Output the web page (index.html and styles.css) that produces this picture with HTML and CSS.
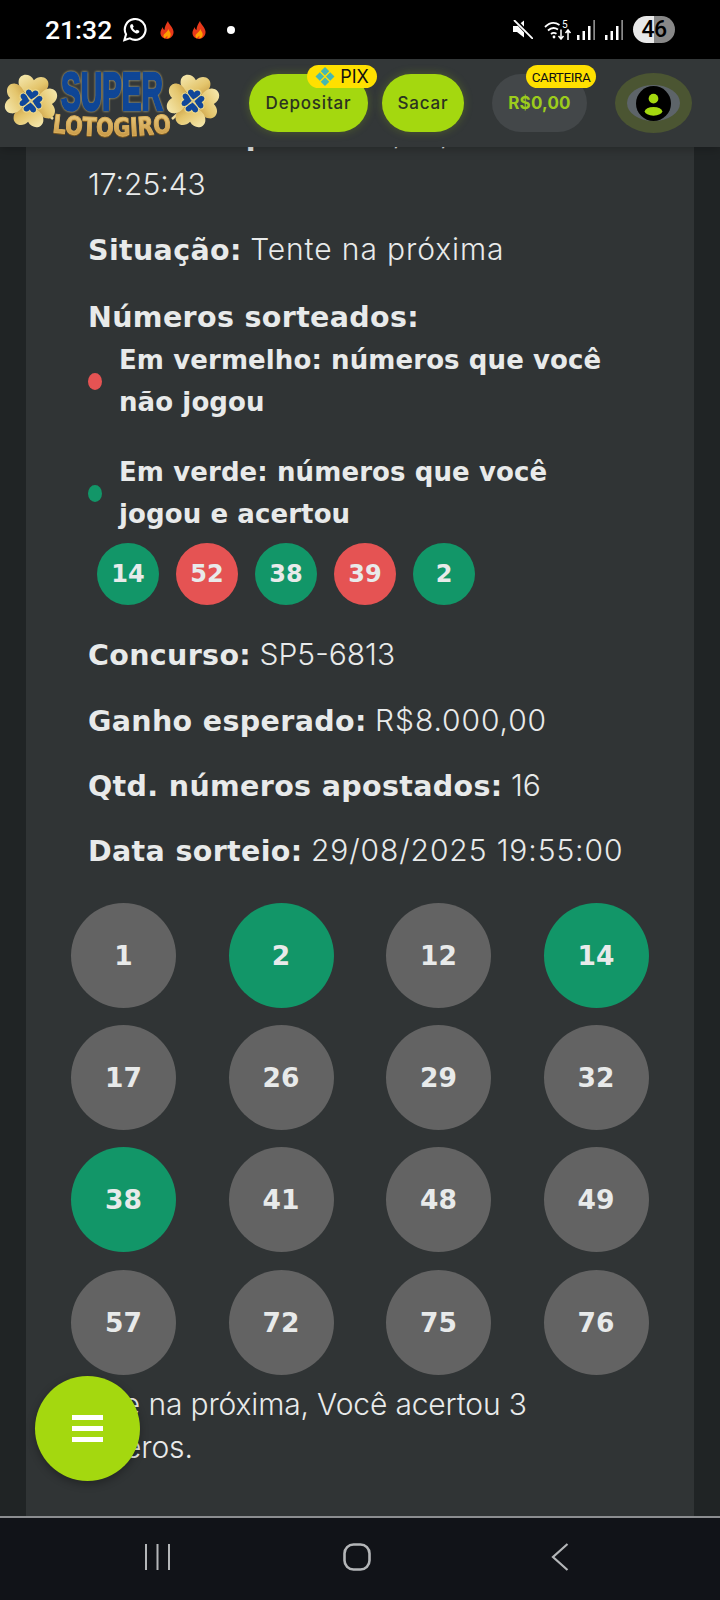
FILE: index.html
```html
<!DOCTYPE html>
<html>
<head>
    <meta name="viewport" content="width=device-width, initial-scale=1" />
    <title>Super Lotogiro</title>
    <link rel="stylesheet" href="styles.css">
</head>

<body>

<div class="statusbar">
    <div class="status-left">
        <span class="clock">21:32</span>
        <svg class="wa-icon" viewBox="0 0 26 26"><path d="M2.500 24l1.700-6A10.800 10.800 0 1 1 8.200 22.200z" fill="none" stroke="#fff" stroke-width="2.200"/><path d="M9.400 7.600c-1 .8-1.200 2.200-.7 3.600 1 2.600 3 4.600 5.600 5.600 1.500.5 2.900.2 3.700-.9l-.1-1.500-2.500-1.200-1.100 1.100c-1.400-.6-2.500-1.700-3.100-3.100l1-1.100-1.100-2.500z" fill="#fff"/></svg>
        <svg class="fire-icon" viewBox="0 0 14 18"><path d="M8 0c.5 3 5 6 5.500 10.500.4 4-2.500 7-6.500 7.500-4-.3-7-3-6.500-7C1 9 2 7.500 2.500 6 3 7.500 3.500 8.500 4.500 9 4.500 6 6 3 8 0z" fill="#e8391a"/><path d="M8.500 8c.3 2 2.500 3.500 2.200 6-.3 2-1.700 3.200-3.200 3.500-.5-1-.2-2 .3-3-1 .8-2.500 1.800-3 3-1-.8-1.500-2-1.300-3.200C4.200 12.500 7 11.500 8.500 8z" fill="#ffa000"/></svg>
        <svg class="fire-icon fire-second" viewBox="0 0 14 18"><path d="M8 0c.5 3 5 6 5.500 10.500.4 4-2.500 7-6.500 7.500-4-.3-7-3-6.500-7C1 9 2 7.500 2.500 6 3 7.500 3.500 8.500 4.500 9 4.500 6 6 3 8 0z" fill="#e8391a"/><path d="M8.500 8c.3 2 2.500 3.500 2.200 6-.3 2-1.700 3.200-3.200 3.500-.5-1-.2-2 .3-3-1 .8-2.500 1.800-3 3-1-.8-1.500-2-1.300-3.200C4.200 12.500 7 11.500 8.500 8z" fill="#ffa000"/></svg>
        <span class="dot"></span>
    </div>
    <div class="status-right">
        <svg class="mute-icon" viewBox="0 0 20 19"><path d="M0 6h4l7-5.500v17L4 12H0z" fill="#fff"/><path d="M2 0l17 18" stroke="#000" stroke-width="4"/><path d="M1 0l19 19" stroke="#fff" stroke-width="1.800"/></svg>
        <svg class="wifi-icon" viewBox="0 0 28 20"><path d="M1 7C5.500 2.500 11 2 15.500 5M4 10.500c3-2.800 7-3 10-1M7 14c1.800-1.500 3.500-1.500 5.500-.2" fill="none" stroke="#fff" stroke-width="1.800"/><circle cx="10" cy="17" r="1.400" fill="#fff"/><path d="M17 9.500v9.500M14.500 16l2.500 3 2.500-3M24 20V10M21.500 13l2.500-3 2.500 3" fill="none" stroke="#fff" stroke-width="1.500"/><text x="18" y="8" class="wifi-five">5</text></svg>
        <svg class="signal-icon" viewBox="0 0 18 20"><path d="M0 15h2.500v5H0zM5.500 11H8v9H5.500zM11 6h2.500v14H11z" fill="#fff"/><path d="M16.300 0H18v20h-1.700z" fill="#8a8a8a"/></svg>
        <svg class="signal-icon" viewBox="0 0 18 20"><path d="M0 15h2.500v5H0zM5.500 11H8v9H5.500zM11 6h2.500v14H11z" fill="#fff"/><path d="M16.300 0H18v20h-1.700z" fill="#8a8a8a"/></svg>
        <div class="battery">46</div>
    </div>
</div>

<div class="topbar">
    <svg class="logo" viewBox="0 0 216 72">
        <defs>
            <linearGradient id="gold" x1="0" y1="0" x2="1" y2="1">
                <stop offset="0" stop-color="#f6ebb4"/>
                <stop offset="0.55" stop-color="#e4c56c"/>
                <stop offset="1" stop-color="#bb8a32"/>
            </linearGradient>
            <linearGradient id="goldText" x1="0" y1="0" x2="0" y2="1">
                <stop offset="0" stop-color="#f0d48a"/>
                <stop offset="1" stop-color="#c08c36"/>
            </linearGradient>
            <path id="leaf" d="M0 -1C-3 -7 -15 -9 -15 -18C-15 -26 -5 -28 0 -21C5 -28 15 -26 15 -18C15 -9 3 -7 0 -1Z"/>
            <g id="clover">
                <use href="#leaf" fill="url(#gold)" transform="rotate(8)"/>
                <use href="#leaf" fill="url(#gold)" transform="rotate(98)"/>
                <use href="#leaf" fill="url(#gold)" transform="rotate(188)"/>
                <use href="#leaf" fill="url(#gold)" transform="rotate(278)"/>
                <use href="#leaf" class="leaf-blue" transform="rotate(8) scale(.46)"/>
                <use href="#leaf" class="leaf-blue" transform="rotate(98) scale(.46)"/>
                <use href="#leaf" class="leaf-blue" transform="rotate(188) scale(.46)"/>
                <use href="#leaf" class="leaf-blue" transform="rotate(278) scale(.46)"/>
            </g>
            <path id="arch" d="M48 65Q108 73 168 65"/>
        </defs>
        <path d="M40 44l9 8" stroke="#f0dc9a" stroke-width="2.500"/>
        <use href="#clover" transform="translate(27 34)"/>
        <path d="M168 52l9-8" stroke="#f0dc9a" stroke-width="2.500"/>
        <use href="#clover" transform="translate(189 34)"/>
        <text x="57" y="43" class="logo-super" textLength="102" lengthAdjust="spacingAndGlyphs">SUPER</text>
        <text class="logo-loto"><textPath href="#arch" textLength="120" lengthAdjust="spacingAndGlyphs">LOTOGIRO</textPath></text>
    </svg>

    <div class="btn-wrap">
        <a class="btn-lime btn-deposit">Depositar</a>
        <span class="tag tag-pix"><svg class="pix-icon" viewBox="0 0 20 20"><path d="M10 0l4.500 4.500-4.500 4.500-4.500-4.500zM10 11l4.500 4.500L10 20l-4.500-4.500zM0 10l4.500-4.500L9 10l-4.500 4.500zM11 10l4.500-4.500L20 10l-4.500 4.500z" fill="#46b8b0"/></svg>PIX</span>
    </div>
    <a class="btn-lime btn-sacar">Sacar</a>
    <div class="btn-wrap">
        <div class="wallet">R$0,00</div>
        <span class="tag tag-wallet">CARTEIRA</span>
    </div>
    <div class="avatar-ring">
        <div class="avatar-inner">
            <svg class="avatar" viewBox="0 0 36 36"><circle cx="18" cy="18" r="18" fill="#000"/><circle cx="18" cy="13" r="5" fill="#a4d80f"/><ellipse cx="18" cy="26" rx="9" ry="4.500" fill="#a4d80f"/></svg>
        </div>
    </div>
</div>

<div class="page">
    <div class="card">
        <!-- page is scrolled: only the bottom of the first line shows under the header -->
        <p class="info info-first"><b>Data de aposta:</b> 29/08/2025<br>17:25:43</p>
        <p class="info"><b>Situação:</b> <span class="wide">Tente na próxima</span></p>
        <p class="info info-drawn"><b>Números sorteados:</b></p>

        <div class="legend legend-red">
            <span class="legend-dot red"></span>
            <span class="legend-text">Em vermelho: números que você<br>não jogou</span>
        </div>
        <div class="legend legend-green">
            <span class="legend-dot green"></span>
            <span class="legend-text">Em verde: números que você<br>jogou e acertou</span>
        </div>

        <div class="drawn">
            <span class="ball green">14</span>
            <span class="ball red">52</span>
            <span class="ball green">38</span>
            <span class="ball red">39</span>
            <span class="ball green">2</span>
        </div>

        <p class="info"><b>Concurso:</b> SP5-6813</p>
        <p class="info"><b>Ganho esperado:</b> <span class="wide">R$8.000,00</span></p>
        <p class="info"><b>Qtd. números apostados:</b> 16</p>
        <p class="info"><b>Data sorteio:</b> <span class="wide">29/08/2025 19:55:00</span></p>

        <div class="grid">
            <span class="pick">1</span>
            <span class="pick green">2</span>
            <span class="pick">12</span>
            <span class="pick green">14</span>
            <span class="pick">17</span>
            <span class="pick">26</span>
            <span class="pick">29</span>
            <span class="pick">32</span>
            <span class="pick green">38</span>
            <span class="pick">41</span>
            <span class="pick">48</span>
            <span class="pick">49</span>
            <span class="pick">57</span>
            <span class="pick">72</span>
            <span class="pick">75</span>
            <span class="pick">76</span>
        </div>

        <p class="result">Tente na próxima, Você acertou 3<br>números.</p>
    </div>

    <a class="fab">
        <span></span>
        <span></span>
        <span></span>
    </a>
</div>

<div class="navbar">
    <svg class="nav-icon nav-recent" viewBox="0 0 25 28"><path d="M1 1v26M12.500 1v26M24 1v26" stroke="#b4b6b8" stroke-width="2" fill="none"/></svg>
    <svg class="nav-icon nav-home" viewBox="0 0 28 28"><rect x="1.500" y="1.500" width="25" height="25" rx="9" stroke="#b4b6b8" stroke-width="2.600" fill="none"/></svg>
    <svg class="nav-icon nav-back" viewBox="0 0 18 28"><path d="M16.500 1L2 14l14.500 13" stroke="#b4b6b8" stroke-width="2.200" fill="none"/></svg>
</div>

</body>
</html>
```

FILE: styles.css
```css
* {
    box-sizing: border-box;
}

html, body {
    margin: 0;
    padding: 0;
}

body {
    width: 720px;
    height: 1600px;
    display: flex;
    flex-direction: column;
    overflow: hidden;
    background-color: #202425;
    color: #e8eaea;
    font-family: Inter, "Open Sans", sans-serif;
}

/* status bar */

.statusbar {
    height: 59px;
    flex: none;
    background-color: #000000;
    display: flex;
    align-items: center;
    justify-content: space-between;
    padding: 0 45px;
    color: #ffffff;
}

.status-left,
.status-right {
    display: flex;
    align-items: center;
}

.clock {
    width: 68px;
    font-family: Roboto, sans-serif;
    font-size: 26.5px;
    font-weight: 500;
}

.wa-icon {
    width: 25px;
    height: 25px;
    margin-left: 9px;
}

.fire-icon {
    width: 14px;
    height: 18px;
    margin-left: 13px;
}

.fire-second {
    margin-left: 18px;
}

.dot {
    width: 8px;
    height: 8px;
    border-radius: 50%;
    background-color: #ffffff;
    margin-left: 21px;
}

.mute-icon {
    width: 20px;
    height: 19px;
}

.wifi-icon {
    width: 28px;
    height: 20px;
    margin-left: 11px;
}

.wifi-five {
    font-family: Roboto, sans-serif;
    font-size: 10px;
    fill: #ffffff;
}

.signal-icon {
    width: 18px;
    height: 20px;
    margin-left: 5px;
}

.signal-icon + .signal-icon {
    margin-left: 10px;
}

.battery {
    width: 42px;
    height: 27px;
    margin-left: 10px;
    border-radius: 14px;
    background: linear-gradient(90deg, #e8e8e8 50%, #888888 50%);
    color: #000000;
    font-family: Roboto, sans-serif;
    font-size: 23px;
    font-weight: 500;
    letter-spacing: -0.5px;
    line-height: 27px;
    text-align: center;
}

/* header */

.topbar {
    height: 88px;
    flex: none;
    background-color: #333738;
    box-shadow: 0 2px 10px rgba(0, 0, 0, 0.25);
    display: flex;
    align-items: center;
    padding-left: 4px;
    position: relative;
    z-index: 2;
}

.logo {
    width: 216px;
    height: 72px;
    flex: none;
    margin-right: 29px;
}

.leaf-blue {
    fill: #10479a;
    stroke: #ecd88a;
    stroke-width: 2.5;
}

.logo-super {
    font-family: "Liberation Sans", sans-serif;
    font-size: 53px;
    font-weight: bold;
    fill: #0f4696;
    stroke: #0f4696;
    stroke-width: 2.6;
    filter: drop-shadow(0 0 0.8px #e0c370);
}

.logo-loto {
    font-family: "DejaVu Sans", sans-serif;
    font-size: 25px;
    font-weight: bold;
    fill: url(#goldText);
    stroke: #d9ae5c;
    stroke-width: 1;
    filter: drop-shadow(0 1.5px 0 #7a5820);
}

.btn-wrap {
    position: relative;
}

.btn-lime {
    display: flex;
    align-items: center;
    justify-content: center;
    height: 58px;
    border-radius: 29px;
    background-color: #a4d80f;
    color: #2b3320;
    font-size: 17px;
    font-weight: 500;
    letter-spacing: 0.8px;
    box-shadow: 0 0 10px rgba(164, 216, 15, 0.25);
}

.btn-deposit {
    width: 119px;
}

.btn-sacar {
    width: 82px;
    margin-left: 14px;
    margin-right: 28px;
}

.wallet {
    width: 95px;
    height: 58px;
    border-radius: 29px;
    background-color: #434749;
    color: #9ccc1c;
    font-size: 17px;
    font-weight: 700;
    letter-spacing: 0.2px;
    display: flex;
    align-items: center;
    justify-content: center;
}

.tag {
    position: absolute;
    top: -9px;
    height: 23px;
    border-radius: 12px;
    background-color: #ffe000;
    color: #111111;
    display: flex;
    align-items: center;
    justify-content: center;
}

.tag-pix {
    left: 58px;
    width: 70px;
    font-size: 18px;
    gap: 5px;
}

.pix-icon {
    width: 20px;
    height: 19px;
}

.tag-wallet {
    left: 34px;
    width: 70px;
    font-family: Roboto, sans-serif;
    font-size: 13.5px;
    letter-spacing: -0.4px;
}

.avatar-ring {
    width: 77px;
    height: 60px;
    margin-left: 28px;
    border-radius: 50%;
    background-color: #4b5532;
    display: flex;
    align-items: center;
    justify-content: center;
}

.avatar-inner {
    width: 53px;
    height: 36px;
    border-radius: 50%;
    background-color: #5d6469;
    display: flex;
    align-items: center;
    justify-content: center;
}

.avatar {
    width: 35px;
    height: 35px;
    flex: none;
}

/* content */

.page {
    flex: 1;
    position: relative;
    overflow: hidden;
}

.card {
    display: flow-root;
    width: 668px;
    height: 100%;
    margin-left: 26px;
    padding: 0 0 0 62px;
    background-color: #303435;
}

.info {
    margin: 0;
    height: 65.3px;
    font-size: 30px;
    line-height: 66px;
    font-weight: 300;
    white-space: nowrap;
}

.info b {
    font-family: "DejaVu Sans", sans-serif;
    font-size: 28.5px;
    font-weight: 700;
    letter-spacing: 0.35px;
}

.wide {
    letter-spacing: 0.9px;
}

.info-first {
    height: 98px;
    line-height: 49px;
    margin-top: -37.5px;
    margin-bottom: 8px;
}

.info-drawn {
    height: 46px;
    line-height: 46px;
    margin-top: 12.7px;
}

.legend {
    display: flex;
    align-items: center;
    font-family: "DejaVu Sans", sans-serif;
    font-size: 26px;
    font-weight: 700;
    letter-spacing: 0.1px;
    line-height: 42px;
}

.legend-green {
    margin-top: 28px;
}

.legend-dot {
    width: 14px;
    height: 17px;
    border-radius: 50%;
    flex: none;
    margin-right: 17px;
}

.red {
    background-color: #e55353;
}

.green {
    background-color: #129668;
}

.drawn {
    display: flex;
    gap: 17px;
    margin: 8px 0 0 9px;
    height: 62px;
}

.ball {
    width: 62px;
    height: 62px;
    border-radius: 50%;
    display: flex;
    align-items: center;
    justify-content: center;
    font-family: "DejaVu Sans", sans-serif;
    font-size: 24px;
    font-weight: 700;
}

.drawn + .info {
    margin-top: 16px;
}

.grid {
    display: grid;
    grid-template-columns: repeat(4, 105px);
    grid-auto-rows: 105px;
    column-gap: 52.5px;
    row-gap: 17.4px;
    margin: 20px 0 0 -17px;
}

.pick {
    border-radius: 50%;
    background-color: #636363;
    display: flex;
    align-items: center;
    justify-content: center;
    font-family: "DejaVu Sans", sans-serif;
    font-size: 26.5px;
    font-weight: 700;
}

.pick.green {
    background-color: #129668;
}

.result {
    margin: 8.5px 0 0 -25px;
    font-size: 30px;
    font-weight: 300;
    letter-spacing: -0.15px;
    line-height: 43px;
    white-space: nowrap;
}

.fab {
    position: absolute;
    left: 35px;
    top: 1229px;
    width: 105px;
    height: 105px;
    border-radius: 50%;
    background-color: #a4d80f;
    box-shadow: 0 3px 8px rgba(0, 0, 0, 0.3);
    display: flex;
    flex-direction: column;
    align-items: center;
    justify-content: center;
    gap: 6px;
}

.fab span {
    width: 31px;
    height: 5px;
    background-color: #ffffff;
}

/* navigation bar */

.navbar {
    height: 84px;
    flex: none;
    border-top: 2px solid #8b8d90;
    background-color: #111318;
    display: flex;
    align-items: center;
    padding: 0 0 4px 145px;
}

.nav-icon {
    height: 28px;
    flex: none;
}

.nav-recent {
    width: 25px;
}

.nav-home {
    width: 28px;
    margin-left: 173px;
}

.nav-back {
    width: 18px;
    margin-left: 180px;
}
```
